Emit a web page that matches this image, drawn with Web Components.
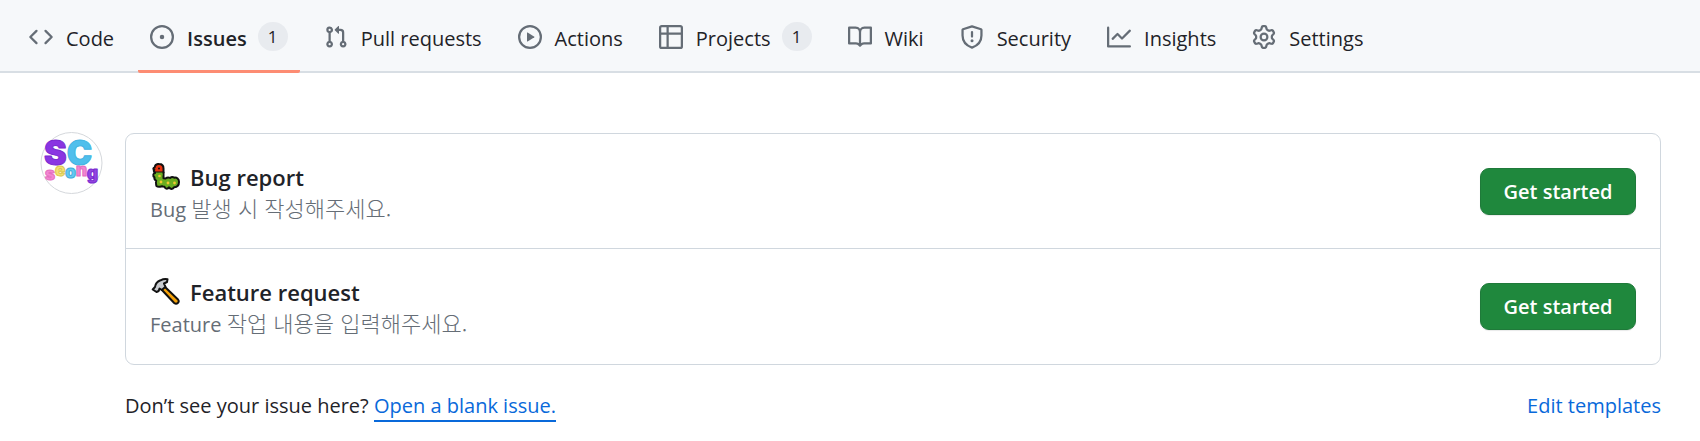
<!DOCTYPE html>
<html lang="ko">
<head>
<meta charset="utf-8">
<meta name="viewport" content="width=device-width, initial-scale=1">
<title>New issue</title>
<style>
body { margin: 0; background: #fff; color: #1f2328; font: 20px/32px "Open Sans", "Noto Sans", "Noto Sans CJK KR", sans-serif; }
</style>
</head>
<body>
<repo-nav>
  <nav-tab icon="code">Code</nav-tab>
  <nav-tab icon="issue" count="1" current>Issues</nav-tab>
  <nav-tab icon="pull">Pull requests</nav-tab>
  <nav-tab icon="play">Actions</nav-tab>
  <nav-tab icon="table" count="1">Projects</nav-tab>
  <nav-tab icon="book">Wiki</nav-tab>
  <nav-tab icon="shield">Security</nav-tab>
  <nav-tab icon="graph">Insights</nav-tab>
  <nav-tab icon="gear">Settings</nav-tab>
</repo-nav>
<template-chooser>
  <user-avatar slot="avatar"></user-avatar>
  <template-row icon="bug" name="Bug report">Bug <span lang="ko">발생 시 작성해주세요.</span></template-row>
  <template-row icon="hammer" name="Feature request">Feature <span lang="ko">작업 내용을 입력해주세요.</span></template-row>
  <chooser-footer slot="footer"></chooser-footer>
</template-chooser>

<script>
const ICONS = {
  code: '<path fill="none" stroke="currentColor" stroke-width="1.5" stroke-linecap="round" stroke-linejoin="round" d="M5 3.9.9 8 5 12.1M11 3.9 15.1 8 11 12.1"/>',
  issue: '<circle cx="8" cy="8" r="7.25" fill="none" stroke="currentColor" stroke-width="1.5"/><circle cx="8" cy="8" r="1.5"/>',
  pull: '<path d="M1.5 3.25a2.25 2.25 0 1 1 3 2.122v5.256a2.251 2.251 0 1 1-1.5 0V5.372A2.25 2.25 0 0 1 1.5 3.25Zm5.677-.177L9.573.677A.25.25 0 0 1 10 .854V2.5h1A2.5 2.5 0 0 1 13.5 5v5.628a2.251 2.251 0 1 1-1.5 0V5a1 1 0 0 0-1-1h-1v1.646a.25.25 0 0 1-.427.177L7.177 3.427a.25.25 0 0 1 0-.354ZM3.75 2.5a.75.75 0 1 0 0 1.5.75.75 0 0 0 0-1.5Zm0 9.5a.75.75 0 1 0 0 1.5.75.75 0 0 0 0-1.5Zm8.25.75a.75.75 0 1 0 1.5 0 .75.75 0 0 0-1.5 0Z"/>',
  play: '<circle cx="8" cy="8" r="7.25" fill="none" stroke="currentColor" stroke-width="1.5"/><path d="M6 5.2v5.6c0 .2.2.3.4.2l4.500-2.800a.25.25 0 0 0 0-.4L6.400 5c-.2-.1-.4 0-.4.2Z"/>',
  table: '<path d="M0 1.75C0 .784.784 0 1.75 0h12.5C15.216 0 16 .784 16 1.75v12.5A1.75 1.75 0 0 1 14.25 16H1.75A1.75 1.75 0 0 1 0 14.25ZM6.5 6.5v8h7.75a.25.25 0 0 0 .25-.25V6.5Zm8-1.5V1.75a.25.25 0 0 0-.25-.25H6.5V5Zm-13 1.5v7.75c0 .138.112.25.25.25H5v-8ZM5 5V1.5H1.75a.25.25 0 0 0-.25.25V5Z"/>',
  book: '<path d="M0 1.75A.75.75 0 0 1 .75 1h4.253c1.227 0 2.317.59 3 1.501A3.743 3.743 0 0 1 11.006 1h4.245a.75.75 0 0 1 .75.75v10.5a.75.75 0 0 1-.75.75h-4.507a2.25 2.25 0 0 0-1.591.659l-.622.621a.75.75 0 0 1-1.06 0l-.622-.621A2.25 2.25 0 0 0 5.258 13H.75a.75.75 0 0 1-.75-.75Zm7.251 10.324.004-5.073-.002-2.253A2.25 2.25 0 0 0 5.003 2.5H1.5v9h3.757a3.75 3.75 0 0 1 1.994.574ZM8.755 4.75l-.004 7.322a3.752 3.752 0 0 1 1.992-.572H14.5v-9h-3.495a2.25 2.25 0 0 0-2.25 2.25Z"/>',
  shield: '<path fill="none" stroke="currentColor" stroke-width="1.5" stroke-linejoin="round" d="m8 .9 6 1.9c.2.1.3.2.3.4V7c0 3.5-1.7 6.4-6.3 8.1C3.4 13.4 1.7 10.5 1.7 7V3.2c0-.2.1-.3.3-.4Z"/><path fill="none" stroke="currentColor" stroke-width="1.5" stroke-linecap="round" d="M8 4.7v3"/><circle cx="8" cy="10.5" r="1"/>',
  graph: '<path d="M1.5 1.75V13.5h13.75a.75.75 0 0 1 0 1.5H.75a.75.75 0 0 1-.75-.75V1.75a.75.75 0 0 1 1.5 0Zm14.28 2.53-5.25 5.25a.75.75 0 0 1-1.06 0L7 7.06 4.28 9.78a.751.751 0 0 1-1.06-1.06l3.25-3.25a.75.75 0 0 1 1.06 0L10 7.94l4.72-4.72a.751.751 0 0 1 1.06 1.06Z"/>',
  gear: '<path d="M8 0a8.2 8.2 0 0 1 .701.031C9.444.095 9.99.645 10.16 1.29l.288 1.107c.018.066.079.158.212.224.231.114.454.243.668.386.123.082.233.09.299.071l1.103-.303c.644-.176 1.392.021 1.82.63.27.385.506.792.704 1.218.315.675.111 1.422-.364 1.891l-.814.806c-.049.048-.098.147-.088.294.016.257.016.515 0 .772-.01.147.038.246.088.294l.814.806c.475.469.679 1.216.364 1.891a7.977 7.977 0 0 1-.704 1.217c-.428.61-1.176.807-1.82.63l-1.102-.302c-.067-.019-.177-.011-.3.071a5.909 5.909 0 0 1-.668.386c-.133.066-.194.158-.211.224l-.29 1.106c-.168.646-.715 1.196-1.458 1.26a8.006 8.006 0 0 1-1.402 0c-.743-.064-1.289-.614-1.458-1.26l-.289-1.106c-.018-.066-.079-.158-.212-.224a5.738 5.738 0 0 1-.668-.386c-.123-.082-.233-.09-.299-.071l-1.103.303c-.644.176-1.392-.021-1.82-.63a8.12 8.12 0 0 1-.704-1.218c-.315-.675-.111-1.422.363-1.891l.815-.806c.05-.048.098-.147.088-.294a6.214 6.214 0 0 1 0-.772c.01-.147-.038-.246-.088-.294l-.815-.806C.635 6.045.431 5.298.746 4.623a7.92 7.92 0 0 1 .704-1.217c.428-.61 1.176-.807 1.82-.63l1.102.302c.067.019.177.011.3-.071.214-.143.437-.272.668-.386.133-.066.194-.158.211-.224l.29-1.106C6.009.645 6.556.095 7.299.03 7.53.01 7.764 0 8 0Zm-.571 1.525c-.036.003-.108.036-.137.146l-.289 1.105c-.147.561-.549.967-.998 1.189-.173.086-.34.183-.5.29-.417.278-.97.423-1.529.27l-1.103-.303c-.109-.03-.175.016-.195.045-.22.312-.412.644-.573.99-.014.031-.021.11.059.19l.815.806c.411.406.562.957.53 1.456a4.709 4.709 0 0 0 0 .582c.032.499-.119 1.05-.53 1.456l-.815.806c-.081.08-.073.159-.059.19.162.346.353.677.573.989.02.03.085.076.195.046l1.102-.303c.56-.153 1.113-.008 1.53.27.161.107.328.204.501.29.447.222.85.629.997 1.189l.289 1.105c.029.109.101.143.137.146a6.6 6.6 0 0 0 1.142 0c.036-.003.108-.036.137-.146l.289-1.105c.147-.561.549-.967.998-1.189.173-.086.34-.183.5-.29.417-.278.97-.423 1.529-.27l1.103.303c.109.029.175-.016.195-.045.22-.313.411-.644.573-.99.014-.031.021-.11-.059-.19l-.815-.806c-.411-.406-.562-.957-.53-1.456a4.709 4.709 0 0 0 0-.582c-.032-.499.119-1.05.53-1.456l.815-.806c.081-.08.073-.159.059-.19a6.464 6.464 0 0 0-.573-.989c-.02-.03-.085-.076-.195-.046l-1.102.303c-.56.153-1.113.008-1.53-.27a4.44 4.44 0 0 0-.501-.29c-.447-.222-.85-.629-.997-1.189l-.289-1.105c-.029-.11-.101-.143-.137-.146a6.6 6.6 0 0 0-1.142 0ZM11 8a3 3 0 1 1-6 0 3 3 0 0 1 6 0ZM9.5 8a1.5 1.5 0 1 0-3.001.001A1.5 1.5 0 0 0 9.5 8Z"/>'
};

const PICTURES = {
  bug: '<g transform="translate(2 0)" stroke="#111" stroke-linejoin="round"><path fill="#6aad20" stroke-width="2" d="M3.5 9.5c-2.500.7-3 3.500-1 4.800-.4 1.700.4 2.800 1.700 3.300-.8 2 0 3.800.2 5.400 2 1.600 4 .6 5.600.2 1 .5 1.600.8 2.500.6 1 2.500 3.500 2.200 4.500.6 1.500 2.200 4 2 5.100-.1 3.200-.3 4.900-2.700 4.900-5.400 0-3-2.200-4.700-4.700-4.200-1.400-.9-3-.8-4.200.2-1.600-.7-3.400-.4-4.600.6l-2-.2V9.500Z"/><path fill="#e8330f" stroke-width="2" d="M3.5 9.5C2 9 1.2 7.5 2.3 6.8 1 6.2 1 4.9 2.6 4.6 3 1.6 5 .8 7.2 1 10 1 11.5 3 11.5 5.5v4Z"/><path fill="#6aad20" stroke="none" d="M4 9.5h6.5v3H4z"/><circle cx="7" cy="5.5" r="1" fill="#111" stroke="none"/><g fill="#f3c832" stroke="none"><circle cx="7.5" cy="13" r="1.3"/><circle cx="9" cy="19" r="1.4"/><circle cx="16" cy="20" r="1.4"/><circle cx="22.5" cy="20" r="1.4"/></g></g>',
  hammer: '<g stroke="#111" stroke-width="2" stroke-linejoin="round"><path fill="#f5a20a" d="m11 11 3-3 14 13.500c2 2.500-1.200 5.500-3.800 3.500Z"/><path fill="#c9ccd0" d="M2.700 11.500 5 9c.3-2.500 2.500-5.500 5.500-6.700C13 1 15.500.8 17.500 1.200L17 4l-3 1.500 1.500 3.300L11.800 12 9.500 10.500 8.700 13 6.500 14Z"/></g>'
};

// Registers an element whose open shadow root is filled by render().
const define = (tag, render) => customElements.define(tag, class extends HTMLElement {
  constructor() {
    super();
    this.attachShadow({ mode: 'open' });
  }
  connectedCallback() {
    this.shadowRoot.innerHTML = render(this);
  }
});

define('repo-nav', () => `
<style>
:host { display: block; background: #f6f8fa; border-bottom: 2px solid #d8dee4; }
nav { display: flex; gap: 12px; padding: 0 17px; }
</style>
<nav aria-label="Repository"><slot></slot></nav>`);

define('nav-tab', el => `
<style>
:host { display: block; margin-bottom: -2px; }
a { display: flex; align-items: center; height: 73px; padding: 7px 12px 0; box-sizing: border-box; color: inherit; text-decoration: none; white-space: nowrap; border-bottom: 3px solid transparent; }
a[aria-current] { font-weight: 600; border-color: #fd8c73; border-radius: 2px; }
svg { width: 24px; height: 24px; flex: none; overflow: visible; color: #656d76; margin: 0 13px 4px 0; }
.count { min-width: 30px; height: 29px; line-height: 29px; box-sizing: border-box; border-radius: 15px; background: #e8ebef; text-align: center; font-size: 17px; font-weight: 500; margin: 0 0 4px 11px; }
</style>
<a href="#"${el.hasAttribute('current') ? ' aria-current="page"' : ''}>
<svg viewBox="0 0 16 16" fill="currentColor" aria-hidden="true">${ICONS[el.getAttribute('icon')]}</svg>
<span><slot></slot></span>${el.hasAttribute('count') ? `<span class="count">${el.getAttribute('count')}</span>` : ''}</a>`);

define('user-avatar', () => `
<style>
:host { display: block; width: 63px; }
svg { display: block; width: 63px; height: 63px; }
text { font-family: Inter, sans-serif; font-weight: 900; }
</style>
<svg viewBox="0 0 63 63" role="img" aria-label="SC seong">
<defs>
<linearGradient id="p" x2="0" y2="1"><stop stop-color="#a04cf5"/><stop offset="1" stop-color="#6a1fc4"/></linearGradient>
<linearGradient id="b" x2="0" y2="1"><stop stop-color="#63d2f7"/><stop offset="1" stop-color="#2b9fd6"/></linearGradient>
</defs>
<circle cx="31.5" cy="31" r="30.5" fill="#fff" stroke="#d5d8dc"/>
<g stroke-linejoin="round">
<text x="4" y="33" font-size="34" stroke-width="1"><tspan fill="#8a35e2" stroke="#7a2bd0">S</tspan><tspan fill="#50bfec" stroke="#43b4e2">C</tspan></text>
<text x="5" y="48" font-size="17" stroke-width="1"><tspan fill="#f386d2" stroke="#e56fc0">s</tspan><tspan dy="-4" fill="#f3e274" stroke="#dcc94f">e</tspan><tspan dy="2" fill="#63c9f2" stroke="#42addb">o</tspan><tspan dy="-2" fill="#f386d2" stroke="#e56fc0">n</tspan><tspan dy="3" fill="#9145e0" stroke="#7a2bd0">g</tspan></text>
</g></svg>`);

define('template-chooser', () => `
<style>
:host { display: grid; grid-template-columns: 63px 1fr; column-gap: 22px; padding: 59px 39px 16px 40px; }
.list { margin-top: 1px; padding-bottom: 1px; border: 1px solid #d0d7de; border-radius: 9px; }
.footer { grid-column: 2; }
</style>
<slot name="avatar"></slot>
<main class="list"><slot></slot></main>
<div class="footer"><slot name="footer"></slot></div>`);

define('template-row', el => `
<style>
:host { display: flex; align-items: center; justify-content: space-between; gap: 24px; padding: 22px 24px; }
:host(:not(:first-of-type)) { border-top: 1px solid #d0d7de; }
.text { padding-top: 4px; }
h2 { display: flex; align-items: center; gap: 10px; margin: 0; font-size: 22px; line-height: 34px; font-weight: 600; }
svg { width: 30px; height: 28px; flex: none; }
p { margin: 0; color: #656d76; line-height: 32px; }
::slotted(span) { font-family: "Noto Sans CJK KR", sans-serif; font-size: 22px; font-weight: 300; line-height: 1; }
button { flex: none; width: 156px; height: 47px; padding: 2px 0 0; border: 1px solid #1f7a3a; border-radius: 9px; background: #1f883d; color: #fff; font: inherit; font-weight: 600; box-shadow: 0 1px 1px #1f23281a; }
</style>
<div class="text">
<h2><svg viewBox="0 0 30 28" aria-hidden="true">${PICTURES[el.getAttribute('icon')]}</svg>${el.getAttribute('name')}</h2>
<p><slot></slot></p>
</div>
<button type="button">Get started</button>`);

define('chooser-footer', () => `
<style>
:host { display: flex; justify-content: space-between; padding-top: 25px; }
a { color: #0969da; text-decoration: none; }
.blank { display: inline-block; line-height: 28px; border-bottom: 2px solid #0969da; }
</style>
<span>Don’t see your issue here? <a class="blank" href="#">Open a blank issue.</a></span>
<a href="#">Edit templates</a>`);
</script>
</body>
</html>
